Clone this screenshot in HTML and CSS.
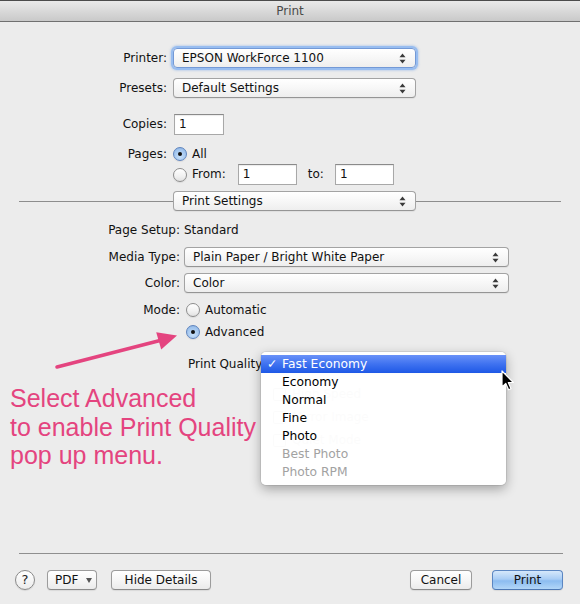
FILE: index.html
```html
<!DOCTYPE html>
<html>
<head>
<meta charset="utf-8">
<title>Print</title>
<link rel="stylesheet" href="styles.css">
</head>
<body>
<div class="window">
  <header class="titlebar">Print</header>
  <main class="content">
    <section class="general">
      <div class="row r-printer">
        <span class="lbl">Printer:</span>
        <div class="popup popup-main focus"><span>EPSON WorkForce 1100</span><svg class="updown" width="7" height="11" viewBox="0 0 7 11"><polygon points="0.5,4.2 3.5,0.6 6.5,4.2"/><polygon points="0.5,6.8 3.5,10.4 6.5,6.8"/></svg></div>
      </div>
      <div class="row r-presets">
        <span class="lbl">Presets:</span>
        <div class="popup popup-main"><span>Default Settings</span><svg class="updown" width="7" height="11" viewBox="0 0 7 11"><polygon points="0.5,4.2 3.5,0.6 6.5,4.2"/><polygon points="0.5,6.8 3.5,10.4 6.5,6.8"/></svg></div>
      </div>
      <div class="row r-copies">
        <span class="lbl">Copies:</span>
        <span class="field field-copies">1</span>
      </div>
      <div class="row r-pages">
        <span class="lbl">Pages:</span>
        <span class="radio on"></span><span class="opt">All</span>
      </div>
      <div class="row r-from">
        <span class="lbl"></span>
        <span class="radio"></span><span class="opt">From:</span>
        <span class="field field-range from-field">1</span>
        <span class="to-lbl">to:</span>
        <span class="field field-range to-field">1</span>
      </div>
    </section>

    <div class="divider">
      <span class="rule rule-left"></span>
      <div class="popup popup-main"><span>Print Settings</span><svg class="updown" width="7" height="11" viewBox="0 0 7 11"><polygon points="0.5,4.2 3.5,0.6 6.5,4.2"/><polygon points="0.5,6.8 3.5,10.4 6.5,6.8"/></svg></div>
      <span class="rule"></span>
    </div>

    <section class="settings">
      <div class="row r-setup">
        <span class="lbl2">Page Setup:</span><span class="value">Standard</span>
      </div>
      <div class="row r-media">
        <span class="lbl2">Media Type:</span>
        <div class="popup popup-wide"><span>Plain Paper / Bright White Paper</span><svg class="updown" width="7" height="11" viewBox="0 0 7 11"><polygon points="0.5,4.2 3.5,0.6 6.5,4.2"/><polygon points="0.5,6.8 3.5,10.4 6.5,6.8"/></svg></div>
      </div>
      <div class="row r-color">
        <span class="lbl2">Color:</span>
        <div class="popup popup-wide"><span>Color</span><svg class="updown" width="7" height="11" viewBox="0 0 7 11"><polygon points="0.5,4.2 3.5,0.6 6.5,4.2"/><polygon points="0.5,6.8 3.5,10.4 6.5,6.8"/></svg></div>
      </div>
      <div class="row r-mode">
        <span class="lbl2">Mode:</span>
        <span class="radio mode-radio"></span><span class="opt">Automatic</span>
      </div>
      <div class="row r-adv">
        <span class="lbl2"></span>
        <span class="radio mode-radio on"></span><span class="opt">Advanced</span>
      </div>
      <div class="row r-quality">
        <span class="quality-lbl">Print Quality:</span>
        <div class="popup popup-quality"></div>
      </div>
      <div class="row r-check first">
        <span class="checkbox"></span><span>High Speed</span>
      </div>
      <div class="row r-check">
        <span class="checkbox"></span><span>Mirror Image</span>
      </div>
      <div class="row r-check">
        <span class="checkbox"></span><span>Quiet Mode</span>
      </div>
    </section>
  </main>

  <footer class="footer">
    <div class="footer-rule"></div>
    <div class="footer-bar">
      <div class="group-left">
        <span class="help">?</span>
        <span class="btn btn-pdf">PDF <span class="caret"></span></span>
        <span class="btn btn-details">Hide Details</span>
      </div>
      <div class="group-right">
        <span class="btn btn-cancel">Cancel</span>
        <span class="btn btn-print">Print</span>
      </div>
    </div>
  </footer>
</div>

<div class="menu">
  <div class="item sel"><span class="tick">✓</span>Fast Economy</div>
  <div class="item">Economy</div>
  <div class="item">Normal</div>
  <div class="item">Fine</div>
  <div class="item">Photo</div>
  <div class="item dis">Best Photo</div>
  <div class="item dis">Photo RPM</div>
</div>

<svg class="cursor" width="14" height="22" viewBox="0 0 14 22"><path d="M1 1 L1 17 L4.8 13.4 L7.6 19.8 L10 18.8 L7.3 12.5 L12.4 12.5 Z" fill="#000" stroke="#fff" stroke-width="1.2" stroke-linejoin="round"/></svg>

<svg class="callout" width="580" height="604" viewBox="0 0 580 604">
  <line x1="57" y1="367" x2="160" y2="340.5" stroke="#e4447f" stroke-width="3.5" stroke-linecap="round"/>
  <polygon points="177,335.5 156.2,332.2 161.2,349.5" fill="#e4447f"/>
</svg>

<p class="note">Select Advanced<br>to enable Print Quality<br>pop up menu.</p>
</body>
</html>
```

FILE: styles.css
```css
html, body {
  margin: 0;
  padding: 0;
}

body {
  width: 580px;
  height: 604px;
  overflow: hidden;
  position: relative;
  background: #ececec;
  font-family: "DejaVu Sans", "Liberation Sans", sans-serif;
  font-size: 12px;
  line-height: 1.2;
  color: #111;
}

.window {
  display: flex;
  flex-direction: column;
  height: 604px;
}

/* title bar */
.titlebar {
  height: 20px;
  line-height: 21px;
  border-top: 1px solid #4b4b4b;
  border-bottom: 1px solid #707070;
  background: linear-gradient(#e9e9e9, #d6d6d6 60%, #c9c9c9);
  text-align: center;
  color: #4a4a4a;
  font-size: 12px;
}

.content {
  flex: 1;
}

.row {
  display: flex;
  align-items: center;
  white-space: nowrap;
}

.lbl {
  width: 167px;
  margin-right: 6px;
  text-align: right;
  flex: none;
}

.lbl2 {
  width: 180px;
  margin-right: 4px;
  text-align: right;
  flex: none;
}

/* vertical rhythm */
.r-printer { height: 20px; margin-top: 26px; }
.r-presets { height: 20px; margin-top: 10px; }
.r-copies  { height: 21px; margin-top: 16px; }
.r-pages   { height: 20px; margin-top: 9px; }
.r-from    { height: 21px; }
.divider   { height: 20px; margin-top: 6px; }
.r-setup   { height: 20px; margin-top: 9px; }
.r-media   { height: 20px; margin-top: 7px; }
.r-color   { height: 20px; margin-top: 6px; }
.r-mode    { height: 20px; margin-top: 7px; }
.r-adv     { height: 20px; margin-top: 2px; }
.r-quality { height: 19px; margin-top: 13px; }
.r-check   { height: 20px; margin-top: 3px; padding-left: 273px; color: #888; }
.r-check.first { margin-top: 10px; }

/* popups */
.popup {
  box-sizing: border-box;
  height: 20px;
  display: flex;
  align-items: center;
  justify-content: space-between;
  padding: 0 9px 0 8px;
  border: 1px solid #a3a3a3;
  border-bottom-color: #959595;
  border-radius: 4px;
  background: linear-gradient(#ffffff, #f7f7f7 50%, #eeeeee);
  box-shadow: 0 1px 1px rgba(0, 0, 0, 0.06);
  color: #111;
  flex: none;
}

.popup-main { width: 243px; }
.popup-wide { width: 325px; }

.popup-quality {
  width: 237px;
  height: 19px;
  margin-left: 3px;
  background: linear-gradient(#f4f4f4, #d9d9d9);
  border-color: #909090;
}

.focus {
  border-color: #7399d6;
  box-shadow: 0 0 0 2px #98bdf0, 0 0 2px 3px rgba(120, 165, 230, 0.35);
}

.updown {
  fill: #3a3a3a;
  flex: none;
}

/* text fields */
.field {
  box-sizing: border-box;
  height: 21px;
  line-height: 19px;
  padding-left: 4px;
  border: 1px solid #a8a8a8;
  border-top-color: #8a8a8a;
  background: #fff;
  box-shadow: inset 0 1px 1px rgba(0, 0, 0, 0.08);
  flex: none;
}

.field-copies { width: 50px; margin-left: 1px; }
.field-range  { width: 59px; }
.from-field   { margin-left: 12px; }
.to-lbl       { margin-left: 11px; }
.to-field     { margin-left: 11px; }

/* radios */
.radio {
  box-sizing: border-box;
  width: 14px;
  height: 14px;
  border-radius: 50%;
  border: 1px solid #8d8d8d;
  background: linear-gradient(#ffffff, #f1f1f1 60%, #e2e2e2);
  box-shadow: 0 1px 1px rgba(0, 0, 0, 0.08);
  position: relative;
  flex: none;
}

.radio.on {
  border-color: #5f84bd;
  background: radial-gradient(circle at 50% 70%, #c7e0fa, #9cc1ec 70%, #7fa9de);
}

.radio.on::after {
  content: "";
  position: absolute;
  left: 4px;
  top: 4px;
  width: 4px;
  height: 4px;
  border-radius: 50%;
  background: #111;
}

.mode-radio { margin-left: 2px; }

.opt { margin-left: 5px; }

.value { color: #111; }

.divider {
  display: flex;
  align-items: center;
  padding: 0 19px;
}

.rule {
  flex: 1;
  height: 1px;
  background: #8d8d8d;
}

.rule-left {
  flex: none;
  width: 154px;
}

.quality-lbl {
  padding-left: 188px;
}

.checkbox {
  box-sizing: border-box;
  width: 13px;
  height: 13px;
  margin-right: 6px;
  border: 1px solid #8d8d8d;
  border-radius: 2px;
  background: linear-gradient(#fff, #e8e8e8);
  flex: none;
}

/* footer */
.footer-rule {
  height: 1px;
  margin: 0 17px 0 19px;
  background: #8f8f8f;
}

.footer-bar {
  display: flex;
  justify-content: space-between;
  align-items: center;
  height: 20px;
  padding: 16px 17px 14px 15px;
}

.group-left,
.group-right {
  display: flex;
  align-items: center;
}

.help {
  box-sizing: border-box;
  width: 20px;
  height: 20px;
  border-radius: 50%;
  border: 1px solid #8a8a8a;
  background: linear-gradient(#ffffff, #ececec);
  box-shadow: 0 1px 1px rgba(0, 0, 0, 0.1);
  display: flex;
  align-items: center;
  justify-content: center;
  font-size: 13px;
  color: #222;
}

.btn {
  box-sizing: border-box;
  height: 20px;
  display: flex;
  align-items: center;
  justify-content: center;
  border: 1px solid #9c9c9c;
  border-bottom-color: #8a8a8a;
  border-radius: 4px;
  background: linear-gradient(#ffffff, #f6f6f6 50%, #ebebeb);
  box-shadow: 0 1px 1px rgba(0, 0, 0, 0.08);
  color: #111;
}

.btn-pdf {
  width: 50px;
  margin-left: 12px;
  justify-content: flex-start;
  padding-left: 7px;
}

.caret {
  width: 0;
  height: 0;
  margin-left: 8px;
  border-left: 3.5px solid transparent;
  border-right: 3.5px solid transparent;
  border-top: 5px solid #555;
}

.btn-details { width: 100px; margin-left: 14px; }
.btn-cancel  { width: 62px; }

.btn-print {
  width: 71px;
  margin-left: 20px;
  border-color: #5b86c2;
  border-bottom-color: #4d78b4;
  background: linear-gradient(#d6e8fb, #a9cdf5 45%, #8cbcf0 55%, #b2d6f8);
}

/* popup menu overlay */
.menu {
  position: absolute;
  left: 261px;
  top: 352px;
  width: 245px;
  padding: 3px 0 4px;
  background: rgba(255, 255, 255, 0.97);
  border-radius: 5px;
  box-shadow: 0 4px 12px rgba(0, 0, 0, 0.32), 0 0 0 1px rgba(0, 0, 0, 0.07);
}

.item {
  position: relative;
  height: 18px;
  line-height: 18px;
  padding-left: 21px;
  font-size: 12.3px;
  color: #000;
}

.item.sel {
  color: #fff;
  background: linear-gradient(#6a92f8, #3f72f0 50%, #1e58e6);
}

.tick {
  position: absolute;
  left: 6px;
  top: 0;
  font-weight: bold;
}

.item.dis { color: #a2a2a2; }

.cursor {
  position: absolute;
  left: 501px;
  top: 370px;
}

.callout {
  position: absolute;
  left: 0;
  top: 0;
  pointer-events: none;
}

.note {
  position: absolute;
  left: 10px;
  top: 384px;
  margin: 0;
  font-family: "Liberation Sans", Arial, sans-serif;
  font-size: 25px;
  line-height: 28.5px;
  color: #e4447f;
}
```
